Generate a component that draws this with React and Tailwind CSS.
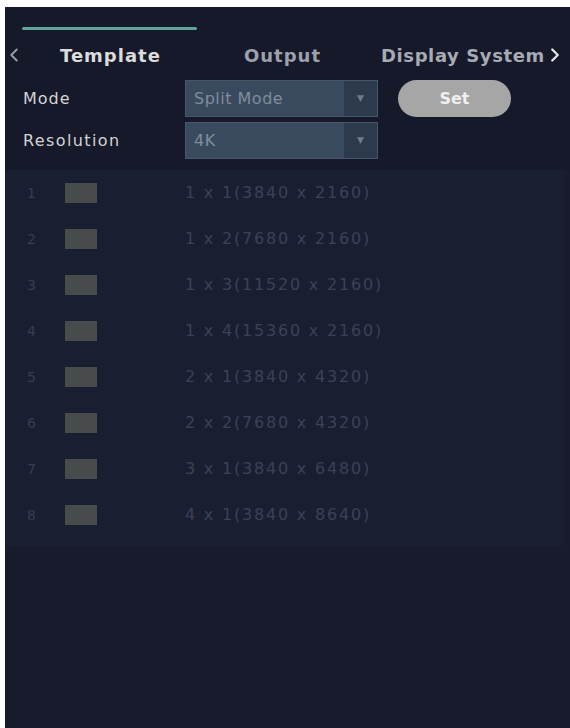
import { ChevronLeft, ChevronRight } from "lucide-react"

const LAYOUTS = [
  "1 x 1(3840 x 2160)",
  "1 x 2(7680 x 2160)",
  "1 x 3(11520 x 2160)",
  "1 x 4(15360 x 2160)",
  "2 x 1(3840 x 4320)",
  "2 x 2(7680 x 4320)",
  "3 x 1(3840 x 6480)",
  "4 x 1(3840 x 8640)",
]

function Select({ value }) {
  return (
    <div className="w-[193px] h-[37px] flex bg-[#3a4a5e] border border-[#46576b]">
      <span className="flex-1 flex items-center pl-2 text-[16px] tracking-[0.5px] text-[#7f8d9c]">{value}</span>
      <span className="w-[33px] flex items-center justify-center bg-[#2c3a4b] text-[#6d7c8c] text-[9px]">▼</span>
    </div>
  )
}

export default function App() {
  return (
    <div className="w-[570px] h-[728px] bg-white pt-[7px] pl-[5px] flex font-['DejaVu_Sans',sans-serif]">
      <div className="flex-1 flex flex-col bg-[#181b2b] overflow-hidden">

        {/* tabs */}
        <div className="h-[163px] bg-[#161929]">
          <div className="h-[20px]" />
          <div className="ml-[17px] w-[175px] h-[3px] rounded-full bg-[#5ea59e]" />
          <div className="h-[44px] flex items-center pt-[6px] whitespace-nowrap">
            <ChevronLeft size={22} strokeWidth={2} className="shrink-0 text-[#9aa0aa] ml-[-2px]" />
            <span className="shrink-0 ml-[35px] w-[184px] text-[18px] tracking-[1px] font-bold text-[#dcdcdc]">Template</span>
            <span className="shrink-0 w-[137px] text-[18px] tracking-[1px] font-bold text-[#9ca1ab]">Output</span>
            <span className="shrink-0 text-[18px] tracking-[0.6px] font-bold text-[#a6abb4]">Display System</span>
            <ChevronRight size={22} strokeWidth={2.5} className="shrink-0 text-[#e6e6e6] ml-[-1px]" />
          </div>

          {/* settings */}
          <div className="flex items-center h-[37px] mt-[6px]">
            <span className="w-[180px] pl-[18px] text-[16px] tracking-[1px] text-[#d4d4d4]">Mode</span>
            <Select value="Split Mode" />
            <button className="ml-[20px] w-[113px] h-[37px] rounded-full bg-[#a6a6a6] text-[16px] font-bold text-[#f0f0f0]">Set</button>
          </div>
          <div className="flex items-center h-[37px] mt-[5px]">
            <span className="w-[180px] pl-[18px] text-[16px] tracking-[1.4px] text-[#d4d4d4]">Resolution</span>
            <Select value="4K" />
          </div>
        </div>

        {/* layout list */}
        <div className="bg-[#1a1e31] pb-[8px] mr-[6px]">
          {LAYOUTS.map((l, i) => (
            <div key={l} className="h-[46px] flex items-center">
              <span className="w-[60px] pl-[22px] text-[14px] text-[#363d52]">{i + 1}</span>
              <span className="w-[32px] h-[20px] bg-[#484b4b]" />
              <span className="ml-[88px] text-[16px] tracking-[1.8px] text-[#3b4257]">{l}</span>
            </div>
          ))}
        </div>

      </div>
    </div>
  )
}
